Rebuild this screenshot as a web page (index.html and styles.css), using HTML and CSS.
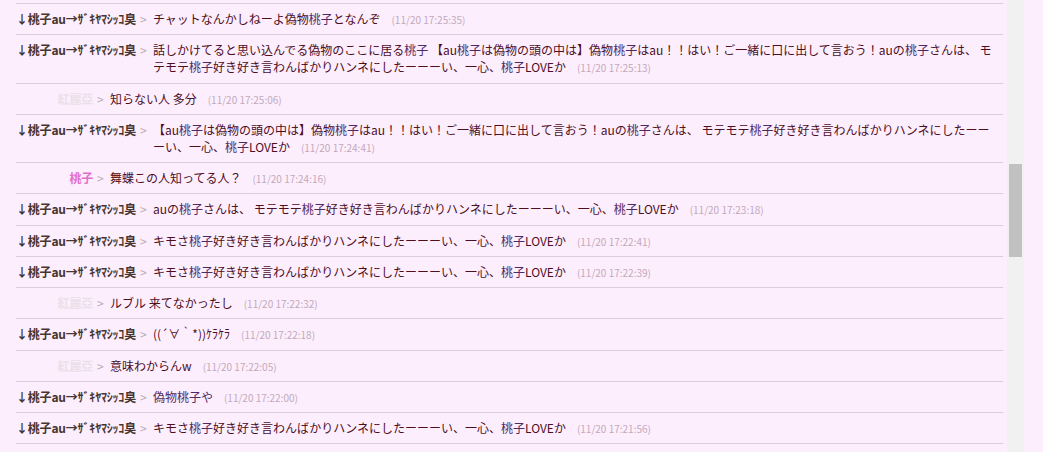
FILE: index.html
```html
<!DOCTYPE html>
<html lang="ja">
  <head>
    <meta charset="UTF-8" />
    <title>チャットログ</title>
    <link rel="stylesheet" href="styles.css">
  </head>
  <body>
    <div class="frame">
      <div class="log">
        <div class="row">
          <span class="name">↓桃子au→ｻﾞｷﾔﾏｼｯｺ臭</span>
          <span class="sep">&gt;</span>
          <p class="msg">チャットなんかしねーよ偽物<span class="hl">桃子</span>となんぞ<span class="time">(11/20 17:25:35)</span></p>
        </div>
        <div class="row">
          <span class="name">↓桃子au→ｻﾞｷﾔﾏｼｯｺ臭</span>
          <span class="sep">&gt;</span>
          <p class="msg">話しかけてると思い込んでる偽物のここに居る<span class="hl">桃子</span> 【au<span class="hl">桃子</span>は偽物の頭の中は】偽物<span class="hl">桃子</span>はau！！はい！ご一緒に口に出して言おう！auの<span class="hl">桃子</span>さんは、 モテモテ<span class="hl">桃子</span>好き好き言わんばかりハンネにしたーーーい、一心、<span class="hl">桃子</span>LOVEか<span class="time">(11/20 17:25:13)</span></p>
        </div>
        <div class="row">
          <span class="name faint">紅麗亞</span>
          <span class="sep">&gt;</span>
          <p class="msg">知らない人 多分<span class="time">(11/20 17:25:06)</span></p>
        </div>
        <div class="row">
          <span class="name">↓桃子au→ｻﾞｷﾔﾏｼｯｺ臭</span>
          <span class="sep">&gt;</span>
          <p class="msg">【au<span class="hl">桃子</span>は偽物の頭の中は】偽物<span class="hl">桃子</span>はau！！はい！ご一緒に口に出して言おう！auの<span class="hl">桃子</span>さんは、 モテモテ<span class="hl">桃子</span>好き好き言わんばかりハンネにしたーーーい、一心、<span class="hl">桃子</span>LOVEか<span class="time">(11/20 17:24:41)</span></p>
        </div>
        <div class="row">
          <span class="name pink">桃子</span>
          <span class="sep">&gt;</span>
          <p class="msg">舞蝶この人知ってる人？<span class="time">(11/20 17:24:16)</span></p>
        </div>
        <div class="row">
          <span class="name">↓桃子au→ｻﾞｷﾔﾏｼｯｺ臭</span>
          <span class="sep">&gt;</span>
          <p class="msg">auの<span class="hl">桃子</span>さんは、 モテモテ<span class="hl">桃子</span>好き好き言わんばかりハンネにしたーーーい、一心、<span class="hl">桃子</span>LOVEか<span class="time">(11/20 17:23:18)</span></p>
        </div>
        <div class="row">
          <span class="name">↓桃子au→ｻﾞｷﾔﾏｼｯｺ臭</span>
          <span class="sep">&gt;</span>
          <p class="msg">キモさ<span class="hl">桃子</span>好き好き言わんばかりハンネにしたーーーい、一心、<span class="hl">桃子</span>LOVEか<span class="time">(11/20 17:22:41)</span></p>
        </div>
        <div class="row">
          <span class="name">↓桃子au→ｻﾞｷﾔﾏｼｯｺ臭</span>
          <span class="sep">&gt;</span>
          <p class="msg">キモさ<span class="hl">桃子</span>好き好き言わんばかりハンネにしたーーーい、一心、<span class="hl">桃子</span>LOVEか<span class="time">(11/20 17:22:39)</span></p>
        </div>
        <div class="row">
          <span class="name faint">紅麗亞</span>
          <span class="sep">&gt;</span>
          <p class="msg">ルブル 来てなかったし<span class="time">(11/20 17:22:32)</span></p>
        </div>
        <div class="row">
          <span class="name">↓桃子au→ｻﾞｷﾔﾏｼｯｺ臭</span>
          <span class="sep">&gt;</span>
          <p class="msg">((´∀｀*))ｹﾗｹﾗ<span class="time">(11/20 17:22:18)</span></p>
        </div>
        <div class="row">
          <span class="name faint">紅麗亞</span>
          <span class="sep">&gt;</span>
          <p class="msg">意味わからんw<span class="time">(11/20 17:22:05)</span></p>
        </div>
        <div class="row">
          <span class="name">↓桃子au→ｻﾞｷﾔﾏｼｯｺ臭</span>
          <span class="sep">&gt;</span>
          <p class="msg hl">偽物桃子や<span class="time">(11/20 17:22:00)</span></p>
        </div>
        <div class="row">
          <span class="name">↓桃子au→ｻﾞｷﾔﾏｼｯｺ臭</span>
          <span class="sep">&gt;</span>
          <p class="msg">キモさ<span class="hl">桃子</span>好き好き言わんばかりハンネにしたーーーい、一心、<span class="hl">桃子</span>LOVEか<span class="time">(11/20 17:21:56)</span></p>
        </div>
        <div class="row">
          <span class="name pink">桃子</span>
          <span class="sep">&gt;</span>
          <p class="msg">誰なの？<span class="time">(11/20 17:21:40)</span></p>
        </div>
      </div>
      <div class="scrollbar">
        <div class="thumb"></div>
      </div>
    </div>
  </body>
</html>
```

FILE: styles.css
```css
html,
body {
  margin: 0;
  height: 100%;
  overflow: hidden;
  background: #fdeefd;
}
body {
  font-family: "Noto Sans CJK JP", "Noto Sans", sans-serif;
  font-size: 12px;
  color: #4d0f1f;
}
.frame {
  display: flex;
  width: 1024px;
  height: 452px;
}
.log {
  flex: 1;
  padding: 3px 4px 0 16px;
  overflow: hidden;
}
.row {
  display: flex;
  border-top: 1px solid #dccbdc;
  padding: 6px 0 7.25px;
  line-height: 17px;
}
.name {
  flex: none;
  min-width: 77px;
  text-align: right;
  font-weight: bold;
  letter-spacing: -0.2px;
  color: #463530;
  white-space: nowrap;
}
.name.pink {
  color: #e070cc;
}
.name.faint {
  color: #ebe0ea;
}
.sep {
  flex: none;
  width: 13px;
  padding-left: 4px;
  color: #b5abb5;
}
.msg {
  flex: 1;
  margin: 0;
  padding-right: 6px;
}
.hl {
  color: #4f2a62;
}
.time {
  margin-left: 11px;
  font-size: 10px;
  line-height: 10px;
  color: #c2a9bb;
}
.scrollbar {
  width: 17px;
  background: #f1f1f1;
}
.thumb {
  margin: 164px 2px 0;
  height: 93px;
  background: #c1c1c1;
}
```
